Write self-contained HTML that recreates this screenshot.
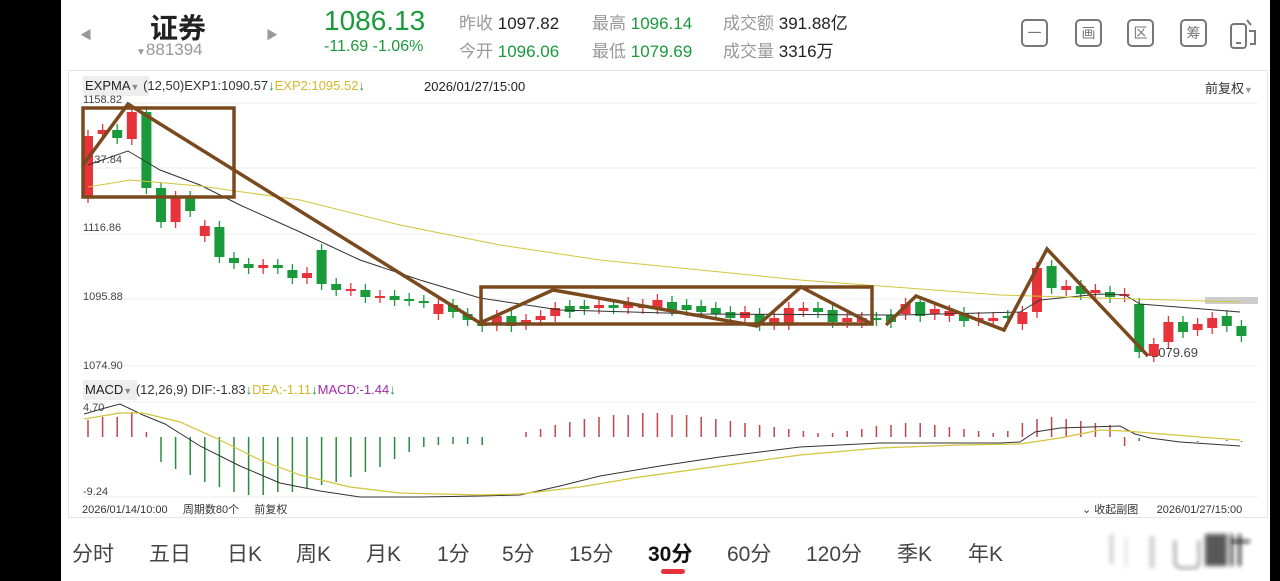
<!DOCTYPE html>
<html><head><meta charset="utf-8"><style>
*{margin:0;padding:0;box-sizing:border-box}
body{width:1280px;height:581px;background:#000;position:relative;overflow:hidden;font-family:"Liberation Sans","Noto Sans CJK SC",sans-serif}
#pg{position:absolute;left:61px;top:0;width:1209px;height:581px;background:#fff}
.a{position:absolute;white-space:nowrap}
.g{color:#1a9a3a}
.l{color:#999}
.k{color:#222}
.ic{position:absolute;top:19px;width:27px;height:28px;border:2px solid #777;border-radius:5px;font-size:14px;color:#777;text-align:center;line-height:24px}
.tab{position:absolute;top:538px;font-size:21px;color:#444}
</style></head><body>
<div id="pg"></div>
<div class="a" style="left:80px;top:26px;font-size:12px;color:#999">◀</div>
<div class="a" style="left:266px;top:26px;font-size:12px;color:#999">▶</div>
<div class="a k" style="left:150px;top:7px;font-size:28px;font-weight:bold">证券</div>
<div class="a" style="left:136px;top:40px;font-size:17px;color:#999"><span style="font-size:10px">▼</span>881394</div>
<div class="a g" style="left:324px;top:5px;font-size:28px">1086.13</div>
<div class="a g" style="left:324px;top:38px;font-size:16px">-11.69 -1.06%</div>
<div class="a" style="left:459px;top:9px;font-size:17px"><span class="l">昨收</span> <span class="k">1097.82</span></div>
<div class="a" style="left:459px;top:37px;font-size:17px"><span class="l">今开</span> <span class="g">1096.06</span></div>
<div class="a" style="left:592px;top:9px;font-size:17px"><span class="l">最高</span> <span class="g">1096.14</span></div>
<div class="a" style="left:592px;top:37px;font-size:17px"><span class="l">最低</span> <span class="g">1079.69</span></div>
<div class="a" style="left:723px;top:9px;font-size:17px"><span class="l">成交额</span> <span class="k">391.88亿</span></div>
<div class="a" style="left:723px;top:37px;font-size:17px"><span class="l">成交量</span> <span class="k">3316万</span></div>
<div class="ic" style="left:1021px">一</div>
<div class="ic" style="left:1075px">画</div>
<div class="ic" style="left:1127px">区</div>
<div class="ic" style="left:1180px">筹</div>
<svg class="a" style="left:1228px;top:17px" width="34" height="34"><rect x="3" y="7" width="15" height="24" rx="3" fill="none" stroke="#777" stroke-width="2"/><line x1="8" y1="26" x2="13" y2="26" stroke="#777" stroke-width="2"/><path d="M21 14 h6 v13 h-5" fill="none" stroke="#777" stroke-width="2"/><path d="M19 3 l4 5" stroke="#777" stroke-width="2"/></svg>
<div class="a" style="left:68px;top:70px;width:1200px;height:448px;border:1px solid #e6e6e6"></div>
<div class="a" style="left:83px;top:76px;width:66px;height:20px;background:#eee"></div>
<div class="a" style="left:85px;top:78px;font-size:13px;color:#222">EXPMA<span style="color:#888;font-size:9px">▼</span> <span style="color:#333">(12,50)EXP1:1090.57</span><span class="g">↓</span><span style="color:#d4b82a">EXP2:1095.52</span><span class="g">↓</span></div>
<div class="a" style="left:424px;top:79px;font-size:13px;color:#222">2026/01/27/15:00</div>
<div class="a" style="left:1205px;top:78px;font-size:13px;color:#333">前复权<span style="color:#999;font-size:9px">▼</span></div>
<div class="a" style="left:83px;top:380px;width:54px;height:20px;background:#eee"></div>
<div class="a" style="left:85px;top:382px;font-size:13px;color:#222">MACD<span style="color:#888;font-size:9px">▼</span> <span style="color:#333">(12,26,9) DIF:-1.83</span><span class="g">↓</span><span style="color:#d4b82a">DEA:-1.11</span><span class="g">↓</span><span style="color:#a12aa5">MACD:-1.44</span><span class="g">↓</span></div>
<div class="a" style="left:82px;top:501px;font-size:11px;color:#333">2026/01/14/10:00 &nbsp;&nbsp;&nbsp; 周期数80个 &nbsp;&nbsp;&nbsp; 前复权</div>
<div class="a" style="left:1082px;top:501px;font-size:11px;color:#333">⌄ 收起副图 &nbsp;&nbsp;&nbsp;&nbsp; 2026/01/27/15:00</div>
<svg id="ch" class="a" style="left:0;top:0" width="1280" height="581"></svg>
<div class="tab" style="left:72px">分时</div>
<div class="tab" style="left:149px">五日</div>
<div class="tab" style="left:227px">日K</div>
<div class="tab" style="left:296px">周K</div>
<div class="tab" style="left:366px">月K</div>
<div class="tab" style="left:437px">1分</div>
<div class="tab" style="left:502px">5分</div>
<div class="tab" style="left:569px">15分</div>
<div class="tab" style="left:648px;color:#111;font-weight:bold">30分</div>
<div class="a" style="left:661px;top:569px;width:24px;height:5px;border-radius:3px;background:#e8333a"></div>
<div class="tab" style="left:727px">60分</div>
<div class="tab" style="left:806px">120分</div>
<div class="tab" style="left:897px">季K</div>
<div class="tab" style="left:968px">年K</div>
<svg class="a" style="left:1090px;top:528px" width="170" height="50">
<defs><filter id="bl"><feGaussianBlur stdDeviation="2"/></filter></defs>
<g filter="url(#bl)" fill="#555">
<rect x="20" y="6" width="3" height="30" opacity=".35"/><rect x="35" y="10" width="2" height="28" opacity=".25"/>
<rect x="60" y="8" width="4" height="32" opacity=".35"/><path d="M85 12 v22 q0 6 8 6 h10 q6 0 6-6 v-22" fill="none" stroke="#333" stroke-width="2" opacity=".6"/>
<rect x="115" y="6" width="22" height="32" fill="#222" opacity=".75"/><rect x="140" y="6" width="3" height="32" fill="#111" opacity=".8"/><rect x="148" y="6" width="3" height="32" fill="#111" opacity=".8"/><rect x="140" y="12" width="20" height="3" fill="#111" opacity=".8"/>
</g></svg>
<script>
var s='';
[103,168,234,299,366].forEach(function(y){s+='<line x1="82" y1="'+y+'" x2="1258" y2="'+y+'" stroke="#eee"/>';});
s+='<line x1="82" y1="402" x2="1258" y2="402" stroke="#eee"/><line x1="82" y1="497" x2="1258" y2="497" stroke="#eee"/>';
s+='<rect x="1205" y="297" width="53" height="7" fill="#ccc"/>';
var lab=[[103,'1158.82'],[163,'1137.84'],[231,'1116.86'],[300,'1095.88'],[369,'1074.90'],[411,'4.70'],[495,'-9.24']];
lab.forEach(function(a){s+='<text x="83" y="'+a[0]+'" font-size="11" fill="#444" font-family="Liberation Sans">'+a[1]+'</text>';});
s+='<text x="1151" y="357" font-size="13" fill="#444" font-family="Liberation Sans">1079.69</text>';
var C=[[136,197,'r'],[130,134,'r'],[130,138,'g'],[112,139,'r'],[112,188,'g'],[188,222,'g'],[197,222,'r'],[197,211,'g'],[226,236,'r'],[227,257,'g'],[258,263,'g'],[264,268,'g'],[265,268,'r'],[265,268,'g'],[270,278,'g'],[273,278,'r'],[250,284,'g'],[284,290,'g'],[289,290,'r'],[290,297,'g'],[296,297,'r'],[296,300,'g'],[299,300,'g'],[301,302,'g'],[304,314,'r'],[305,312,'g'],[314,320,'g'],[323,326,'g'],
[316,325,'r'],[316,326,'g'],[320,324,'r'],[316,320,'r'],[308,316,'r'],[306,312,'g'],[306,309,'g'],[305,308,'r'],[305,308,'g'],[303,308,'r'],[305,308,'r'],[300,308,'r'],[302,310,'g'],[305,310,'g'],[306,312,'g'],[308,314,'g'],[312,318,'g'],[312,318,'r'],[314,325,'g'],[318,324,'r'],[308,324,'r'],[308,311,'r'],[308,312,'g'],[310,322,'g'],[318,322,'r'],[318,322,'r'],[318,320,'g'],[315,322,'g'],[304,314,'r'],[302,316,'g'],[309,314,'r'],[311,316,'r'],[313,321,'g'],[318,320,'r'],[318,321,'r'],[316,318,'g'],[312,324,'r'],[268,312,'r'],[266,288,'g'],[286,290,'r'],[286,294,'g'],[290,293,'r'],[292,297,'g'],[294,296,'r'],[304,352,'g'],[344,356,'r'],[322,342,'r'],[322,332,'g'],[324,330,'r'],[318,328,'r'],[316,326,'g'],[326,336,'g']];
C.forEach(function(c,i){var x=88+i*14.6,col=c[2]=='r'?'#e8333a':'#1a9a3a',h=Math.max(c[1]-c[0],2);
s+='<line x1="'+x+'" y1="'+(c[0]-6)+'" x2="'+x+'" y2="'+(c[1]+6)+'" stroke="'+col+'" stroke-width="1.3"/>';
s+='<rect x="'+(x-5)+'" y="'+c[0]+'" width="10" height="'+h+'" fill="'+col+'"/>';});
s+='<polyline fill="none" stroke="#333" stroke-width="1" points="88,165 128,151 160,170 200,185 240,205 300,232 360,260 420,280 480,298 560,310 700,314 900,315 1020,312 1040,300 1100,294 1125,295 1140,304 1240,312"/>';
s+='<polyline fill="none" stroke="#d4c43a" stroke-width="1" points="88,187 130,180 200,186 300,200 400,225 500,245 600,260 800,280 1000,295 1100,298 1240,302"/>';
var B='#7a4a1e';
s+='<g fill="none" stroke="'+B+'" stroke-width="3.5"><rect x="83" y="108" width="151" height="89"/><rect x="481" y="287" width="391" height="37"/><polyline points="83,165 128,104 480,323 553,290 757,326 801,287 872,324"/><polyline points="886,325 916,296 1004,330 1047,249 1148,356"/></g>';
var M=[-17,-20,-20,-25,-5,25,32,38,45,50,55,58,58,55,55,52,48,45,40,35,30,22,15,10,8,7,7,8,0,0,5,8,12,15,18,20,22,22,24,24,22,22,20,18,16,14,12,10,8,6,4,4,6,8,11,12,14,14,12,10,8,6,4,6,14,18,20,18,16,14,12,-9,-5,-8,-8,-8,-9,-8,-7,-9];
M.forEach(function(v,i){if(!v)return;var x=88+i*14.6,z=437;
if(i>=28&&i<72){s+='<line x1="'+x+'" y1="'+(z-v)+'" x2="'+x+'" y2="'+z+'" stroke="#c0454a" stroke-width="1.5"/>';}
else if(i>=72){s+='<line x1="'+x+'" y1="'+(z+v*-1-4)+'" x2="'+x+'" y2="'+(z+4)+'" stroke="#2a8a3a" stroke-width="1.5"/>';}
else if(v<0){s+='<line x1="'+x+'" y1="'+(z+v)+'" x2="'+x+'" y2="'+z+'" stroke="#c0454a" stroke-width="1.5"/>';}
else{s+='<line x1="'+x+'" y1="'+z+'" x2="'+x+'" y2="'+(z+v)+'" stroke="#2a8a3a" stroke-width="1.5"/>';}});
s+='<polyline fill="none" stroke="#333" stroke-width="1" points="84,414 105,408 120,404 143,415 165,424 200,446 240,466 280,483 320,491 360,497 420,497 480,496 520,495 560,486 600,476 660,466 720,457 800,447 880,443 950,443 1000,443 1020,442 1035,432 1060,428 1120,426 1135,434 1150,438 1180,442 1240,446"/>';
s+='<polyline fill="none" stroke="#d4c43a" stroke-width="1.2" points="84,419 120,413 143,413 180,422 220,440 260,460 300,475 350,487 400,493 480,495 520,494 580,487 640,477 720,466 800,455 880,448 960,445 1020,444 1060,438 1100,430 1125,431 1150,433 1200,437 1240,440"/>';
document.getElementById('ch').innerHTML=s;
</script>
</body></html>
